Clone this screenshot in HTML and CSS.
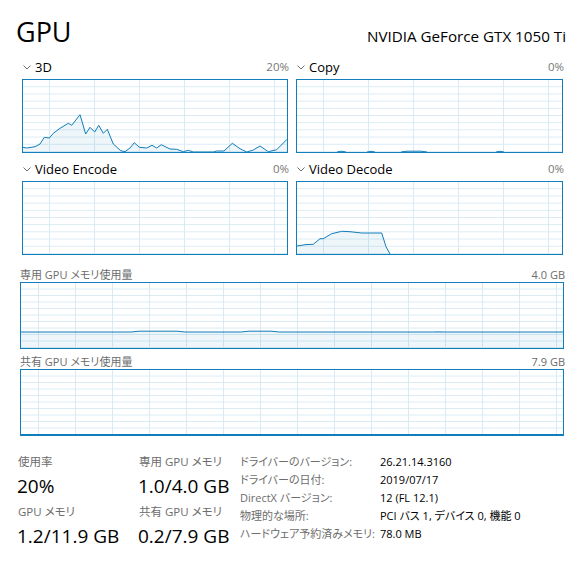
FILE: index.html
```html
<!DOCTYPE html>
<html lang="ja">
<head>
    <meta charset="UTF-8">
    <meta name="viewport" content="width=device-width, initial-scale=1.0">
    <title>GPU</title>
    <link rel="stylesheet" href="styles.css">
</head>
<body>
    <div class="tm">
        <header class="head">
            <h1 class="title">GPU</h1>
            <div class="model">NVIDIA GeForce GTX 1050 Ti</div>
        </header>

        <section class="engines">
            <div class="engine">
                <div class="engine-head">
                    <span class="engine-name"><svg class="chev" viewBox="0 0 8 5"><path d="M0.5 0.5 L4 4 L7.5 0.5"/></svg>3D</span>
                    <span class="engine-pct">20%</span>
                </div>
                <div class="plot plot-engine">
                    <svg viewBox="0 0 264 72" preserveAspectRatio="none">
                        <path class="area" d="M0 72 L0 67.3 L3.7 68 L12 66.7 L17 64 L21.3 57.3 L26.3 58 L30.3 53.3 L37 48.3 L45.3 43.3 L48.7 45.3 L57 34.7 L62.7 54 L67 47.3 L71.7 52 L75.7 45.3 L80.3 53.3 L84.3 49.3 L90.3 64 L97.7 70.7 L102 71.7 L107 68 L111.3 62.7 L116.3 67.3 L123.7 68 L129 65.3 L133.7 68 L138.3 64.7 L147 69 L153.7 69.3 L160.3 71.7 L165.3 70.3 L170.3 72 L190.3 72 L193.7 71 L201 71 L209.3 63.3 L217 68.7 L223.7 72 L230.3 70 L237 66 L245.3 71.7 L253.7 69.7 L264 59.3 L264 72 Z"/>
                        <path class="line" d="M0 67.3 L3.7 68 L12 66.7 L17 64 L21.3 57.3 L26.3 58 L30.3 53.3 L37 48.3 L45.3 43.3 L48.7 45.3 L57 34.7 L62.7 54 L67 47.3 L71.7 52 L75.7 45.3 L80.3 53.3 L84.3 49.3 L90.3 64 L97.7 70.7 L102 71.7 L107 68 L111.3 62.7 L116.3 67.3 L123.7 68 L129 65.3 L133.7 68 L138.3 64.7 L147 69 L153.7 69.3 L160.3 71.7 L165.3 70.3 L170.3 72 L190.3 72 L193.7 71 L201 71 L209.3 63.3 L217 68.7 L223.7 72 L230.3 70 L237 66 L245.3 71.7 L253.7 69.7 L264 59.3"/>
                    </svg>
                </div>
            </div>

            <div class="engine">
                <div class="engine-head">
                    <span class="engine-name"><svg class="chev" viewBox="0 0 8 5"><path d="M0.5 0.5 L4 4 L7.5 0.5"/></svg>Copy</span>
                    <span class="engine-pct">0%</span>
                </div>
                <div class="plot plot-engine">
                    <svg viewBox="0 0 265 72" preserveAspectRatio="none">
                        <path class="line" d="M40 72 L44 71.2 L49 72 M70 72 L74 71.3 L78 72 M104 72 L110 71.2 L124 71.2 L130 72 M199 72 L203 71.3 L207 72"/>
                    </svg>
                </div>
            </div>

            <div class="engine">
                <div class="engine-head">
                    <span class="engine-name"><svg class="chev" viewBox="0 0 8 5"><path d="M0.5 0.5 L4 4 L7.5 0.5"/></svg>Video Encode</span>
                    <span class="engine-pct">0%</span>
                </div>
                <div class="plot plot-engine"></div>
            </div>

            <div class="engine">
                <div class="engine-head">
                    <span class="engine-name"><svg class="chev" viewBox="0 0 8 5"><path d="M0.5 0.5 L4 4 L7.5 0.5"/></svg>Video Decode</span>
                    <span class="engine-pct">0%</span>
                </div>
                <div class="plot plot-engine">
                    <svg viewBox="0 0 265 72" preserveAspectRatio="none">
                        <path class="area" d="M0 72 L0 64 L8 62.7 L16.3 62.3 L23 56.7 L26.3 56.7 L34.7 51.7 L44.7 49.3 L53 49.7 L64.7 51 L84.7 51 L89 64.7 L93 72 Z"/>
                        <path class="line" d="M0 64 L8 62.7 L16.3 62.3 L23 56.7 L26.3 56.7 L34.7 51.7 L44.7 49.3 L53 49.7 L64.7 51 L84.7 51 L89 64.7 L93 72"/>
                    </svg>
                </div>
            </div>
        </section>

        <section class="mem">
            <div class="mem-head">
                <span>専用 GPU メモリ使用量</span>
                <span>4.0 GB</span>
            </div>
            <div class="plot plot-mem">
                <svg viewBox="0 0 542 65" preserveAspectRatio="none">
                    <path class="area" d="M0 65 L0 49 L110 49 L118 48.2 L156 48.2 L164 49 L220 49 L228 48.2 L250 48.2 L258 49 L542 49 L542 65 Z"/>
                    <path class="line" d="M0 49 L110 49 L118 48.2 L156 48.2 L164 49 L220 49 L228 48.2 L250 48.2 L258 49 L542 49"/>
                    <path class="tick" d="M414 48.5 L422 48.5"/>
                </svg>
            </div>

            <div class="mem-head">
                <span>共有 GPU メモリ使用量</span>
                <span>7.9 GB</span>
            </div>
            <div class="plot plot-mem">
                <svg viewBox="0 0 542 65" preserveAspectRatio="none">
                    <path class="line" d="M0 64.5 L542 64.5"/>
                </svg>
            </div>
        </section>

        <section class="stats">
            <div class="stat">
                <div class="stat-label">使用率</div>
                <div class="stat-value">20%</div>
            </div>
            <div class="stat">
                <div class="stat-label">専用 GPU メモリ</div>
                <div class="stat-value">1.0/4.0 GB</div>
            </div>
            <dl class="props">
                <dt>ドライバーのバージョン:</dt><dd>26.21.14.3160</dd>
                <dt>ドライバーの日付:</dt><dd>2019/07/17</dd>
                <dt>DirectX バージョン:</dt><dd>12 (FL 12.1)</dd>
                <dt>物理的な場所:</dt><dd>PCI バス 1, デバイス 0, 機能 0</dd>
                <dt>ハードウェア予約済みメモリ:</dt><dd>78.0 MB</dd>
            </dl>
            <div class="stat">
                <div class="stat-label">GPU メモリ</div>
                <div class="stat-value">1.2/11.9 GB</div>
            </div>
            <div class="stat">
                <div class="stat-label">共有 GPU メモリ</div>
                <div class="stat-value">0.2/7.9 GB</div>
            </div>
        </section>
    </div>
</body>
</html>
```

FILE: styles.css
```css
body {
    margin: 0;
    background: #fff;
    color: #000;
    font-family: "Open Sans", "Noto Sans CJK JP", sans-serif;
    font-feature-settings: "palt";
}
.tm {
    width: 575px;
}
.head {
    display: flex;
    justify-content: space-between;
    align-items: baseline;
    height: 57px;
    box-sizing: border-box;
    padding: 14px 9px 0 16px;
}
.title {
    margin: 0;
    font-size: 27px;
    font-weight: 400;
    line-height: 36px;
}
.model {
    font-size: 15.2px;
}
.engines {
    display: grid;
    grid-template-columns: 266px 267px;
    column-gap: 8px;
    row-gap: 6px;
    padding-left: 22px;
}
.engine-head {
    display: flex;
    justify-content: space-between;
    height: 22px;
    line-height: 20px;
}
.engine-name {
    font-size: 13px;
}
.chev {
    width: 8px;
    height: 5px;
    margin: 0 4px 2px 1px;
    vertical-align: middle;
    fill: none;
    stroke: #707070;
    stroke-width: 1;
}
.engine-pct {
    font-size: 11.5px;
    color: #777;
    margin-right: -1px;
}
.plot {
    box-sizing: border-box;
    border: 1px solid #117dbb;
    background-color: #fff;
    background-repeat: repeat;
}
.plot svg {
    display: block;
    width: 100%;
    height: 100%;
}
.plot .line, .plot .tick {
    fill: none;
    stroke: #117dbb;
    stroke-width: 1;
}
.plot .tick {
    stroke: #6fb0d8;
}
.plot .area {
    fill: #117dbb;
    fill-opacity: 0.07;
}
.plot-engine {
    height: 74px;
    background-image:
        linear-gradient(to right, #d9eaf4 1px, transparent 1px),
        linear-gradient(to top, #d9eaf4 1px, transparent 1px);
    background-size: 45px 100%, 100% 7.2px;
    background-position: 26px 0, 0 0;
}
.mem {
    margin-top: 9px;
    margin-left: 20px;
    width: 544px;
}
.mem-head {
    display: flex;
    justify-content: space-between;
    height: 18px;
    line-height: 22px;
    font-size: 11px;
    color: #6d6d6d;
    margin-right: -1px;
}
.plot-mem {
    height: 67px;
    margin-bottom: 2px;
    background-image:
        linear-gradient(to right, #d9eaf4 1px, transparent 1px),
        linear-gradient(to top, #d9eaf4 1px, transparent 1px);
    background-size: 37px 100%, 100% 6.5px;
    background-position: 17px 0, 0 0;
}
.stats {
    display: grid;
    grid-template-columns: 121px 101px auto;
    grid-template-rows: auto auto;
    row-gap: 3px;
    margin-top: 17px;
    padding-left: 18px;
}
.stat-label {
    font-size: 11.5px;
    line-height: 18px;
    color: #6d6d6d;
}
.stat-value {
    font-size: 19px;
    line-height: 28px;
    margin-top: 1px;
    margin-left: -1px;
}
.props {
    grid-column: 3;
    grid-row: 1 / span 2;
    display: grid;
    grid-template-columns: 140px auto;
    grid-auto-rows: 18px;
    align-content: start;
    margin: 0;
    font-size: 11px;
    line-height: 18px;
}
.props dt {
    color: #6d6d6d;
    white-space: nowrap;
}
.props dd {
    margin: 0;
}
```
